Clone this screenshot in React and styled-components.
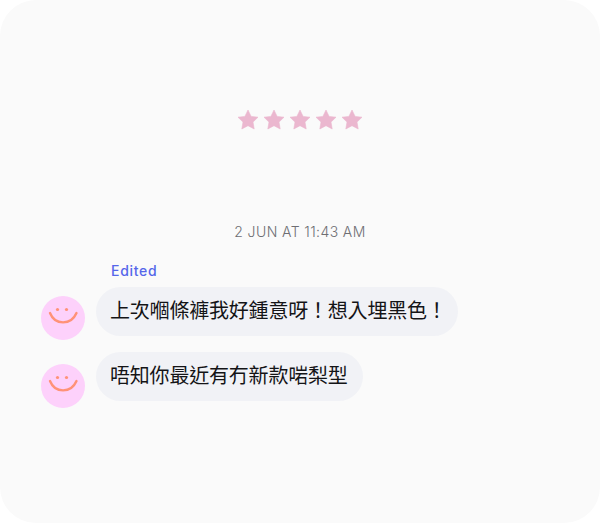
import styled, { createGlobalStyle } from "styled-components";

const GlobalStyle = createGlobalStyle`
  html, body {
    margin: 0;
    padding: 0;
    background: #ffffff;
  }
`;

const Card = styled.div`
  box-sizing: border-box;
  width: 600px;
  height: 523px;
  padding-top: 109px;
  border-radius: 36px;
  background: #fafafa;
  font-family: Inter, "Noto Sans CJK TC", sans-serif;
`;

const Rating = styled.div`
  display: flex;
  justify-content: center;
  gap: 4px;
  height: 22px;
`;

const Timestamp = styled.div`
  margin-top: 92px;
  text-align: center;
  font-size: 14px;
  font-weight: 300;
  line-height: 17px;
  letter-spacing: 0.4px;
  color: #6e6e73;
`;

const Thread = styled.div`
  display: flex;
  flex-direction: column;
  gap: 12px;
  margin-top: 22px;
  padding-left: 41px;
`;

const EditedLabel = styled.div`
  margin-left: 70px;
  margin-bottom: -4px;
  font-size: 14px;
  font-weight: 500;
  line-height: 17px;
  letter-spacing: 0.7px;
  color: #5566ea;
`;

const Row = styled.div`
  display: flex;
  align-items: flex-start;
  gap: 11px;
`;

const Avatar = styled.svg`
  flex: none;
  width: 44px;
  height: 44px;
  margin-top: ${(props) => props.$offset}px;
`;

const Bubble = styled.div`
  padding: 10px ${(props) => props.$tail}px 14px 14px;
  border-radius: 25px;
  background: #f1f2f6;
  font-family: "Noto Sans CJK TC", sans-serif;
  font-size: 20px;
  line-height: 25px;
  letter-spacing: -0.2px;
  color: #141416;
`;

function Star() {
  return (
    <svg width="22" height="22" viewBox="0 0 22 22">
      <path
        d="M11 1 L14.1 7.4 L21 8.2 L16 13.1 L17.2 20 L11 16.7 L4.8 20 L6 13.1 L1 8.2 L7.9 7.4 Z"
        fill="#ebb7cf"
        stroke="#ebb7cf"
        strokeWidth="0.6"
        strokeLinejoin="round"
      />
    </svg>
  );
}

function Smiley({ offset }) {
  return (
    <Avatar $offset={offset} viewBox="0 0 44 44">
      <circle cx="22" cy="22" r="22" fill="#fdd1fb" />
      <circle cx="16.5" cy="13.5" r="1.6" fill="#ff9277" />
      <circle cx="25.5" cy="13.5" r="1.6" fill="#ff9277" />
      <path
        d="M9 17 C14 29.5 30 29.5 35.5 17"
        fill="none"
        stroke="#ff9277"
        strokeWidth="2.4"
        strokeLinecap="round"
      />
    </Avatar>
  );
}

const messages = [
  { text: "上次嗰條褲我好鍾意呀！想入埋黑色！", offset: 9, tail: 11 },
  { text: "唔知你最近有冇新款啱梨型", offset: 12, tail: 15 },
];

export default function App() {
  return (
    <>
      <GlobalStyle />
      <Card>
        <Rating>
          {[0, 1, 2, 3, 4].map((i) => (
            <Star key={i} />
          ))}
        </Rating>
        <Timestamp>2 JUN AT 11:43 AM</Timestamp>
        <Thread>
          <EditedLabel>Edited</EditedLabel>
          {messages.map((message) => (
            <Row key={message.text}>
              <Smiley offset={message.offset} />
              <Bubble $tail={message.tail}>{message.text}</Bubble>
            </Row>
          ))}
        </Thread>
      </Card>
    </>
  );
}
